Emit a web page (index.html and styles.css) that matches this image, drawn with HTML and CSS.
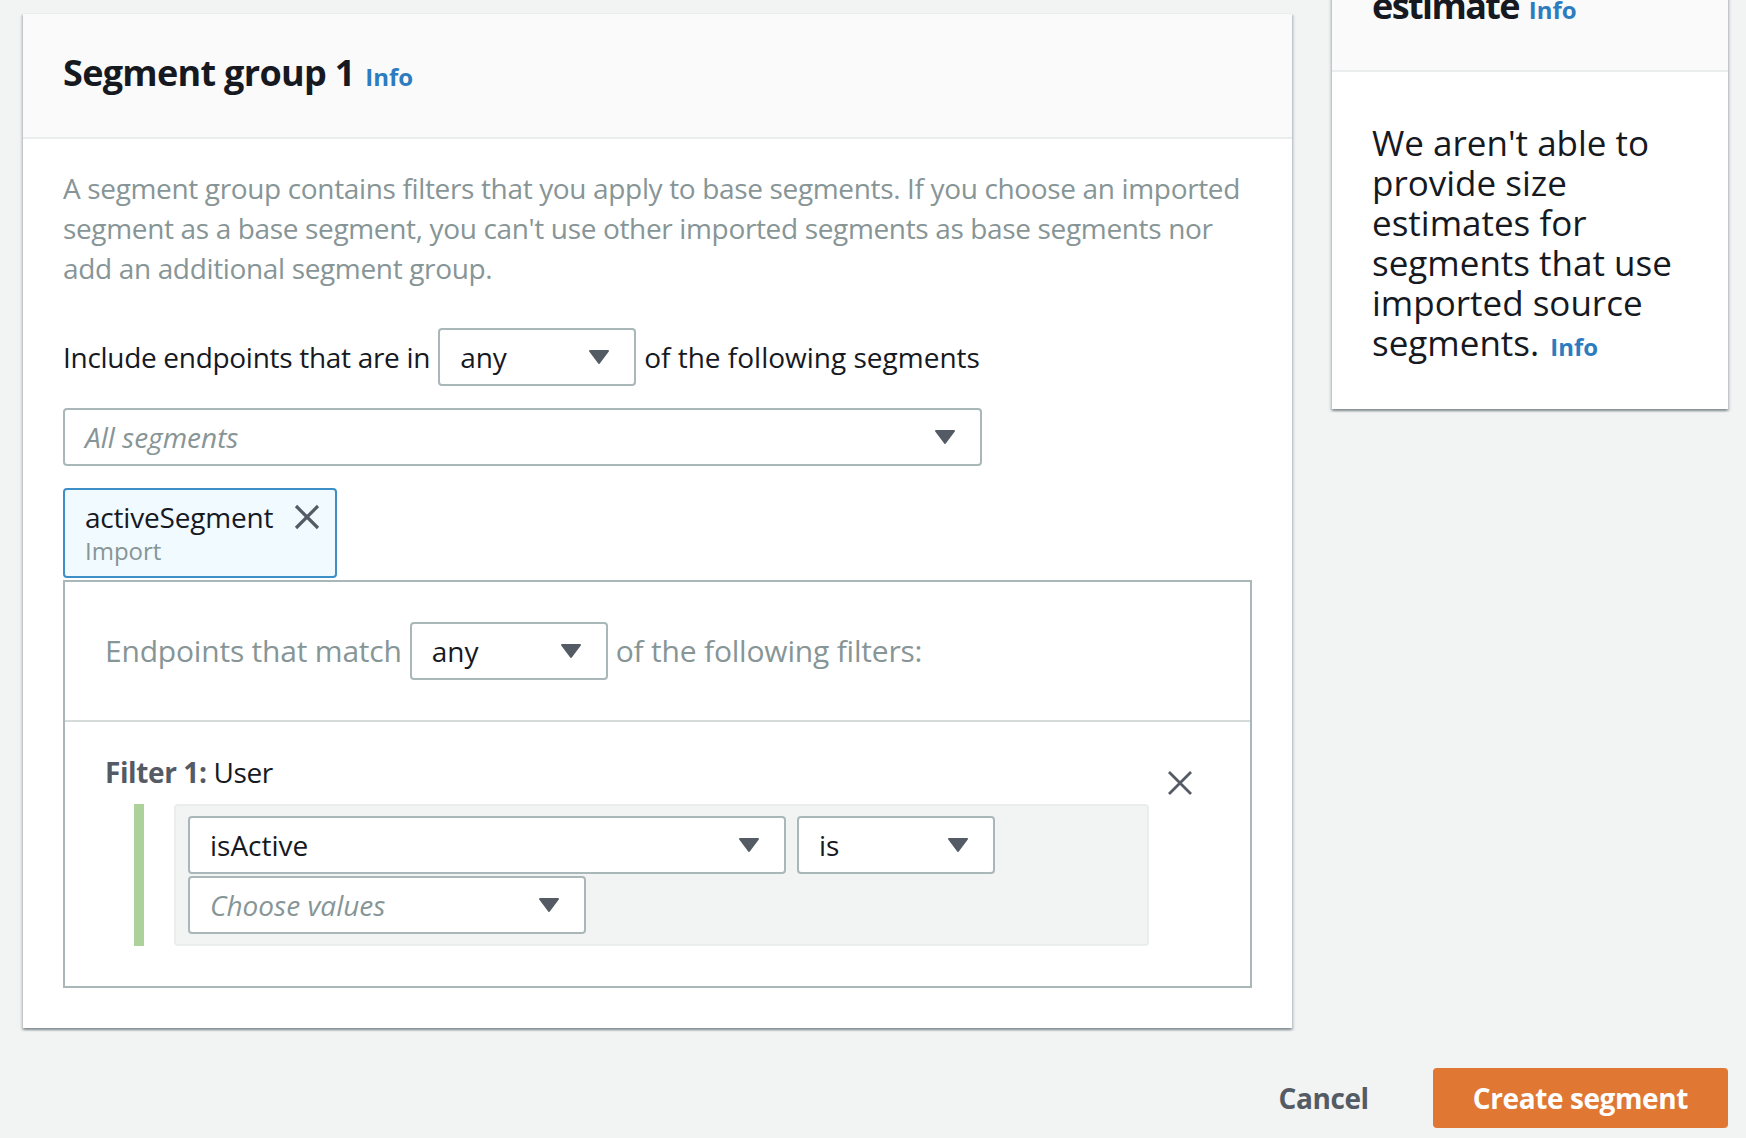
FILE: index.html
```html
<!DOCTYPE html>
<html lang="en">
<head>
<meta charset="utf-8">
<title>Create segment</title>
<link rel="stylesheet" href="styles.css">
</head>
<body>
<div class="page">
  <main class="card main-card">
    <div class="card-header">
      <h2 class="card-title">Segment group 1 <a class="info">Info</a></h2>
    </div>
    <div class="card-body">
      <p class="desc">A segment group contains filters that you apply to base segments. If you choose an imported<br>segment as a base segment, you can't use other imported segments as base segments nor<br>add an additional segment group.</p>

      <div class="inline-row include-row">
        <span class="tight">Include endpoints that are in</span>
        <div class="select select-sm"><span>any</span><svg class="caret" width="22" height="16" viewBox="0 0 22 16"><path d="M2 2h18L11 14z"/></svg></div>
        <span>of the following segments</span>
      </div>

      <div class="select select-wide placeholder"><span>All segments</span><svg class="caret" width="22" height="16" viewBox="0 0 22 16"><path d="M2 2h18L11 14z"/></svg></div>

      <div class="token">
        <div class="token-text">
          <div class="token-name">activeSegment</div>
          <div class="token-sub">Import</div>
        </div>
        <svg class="x-icon token-x" width="28" height="28" viewBox="0 0 28 28"><path d="M3 3L25 25M25 3L3 25"/></svg>
      </div>

      <div class="filter-box">
        <div class="inline-row filter-head">
          <span>Endpoints that match</span>
          <div class="select select-sm"><span>any</span><svg class="caret" width="22" height="16" viewBox="0 0 22 16"><path d="M2 2h18L11 14z"/></svg></div>
          <span>of the following filters:</span>
        </div>
        <div class="filter-body">
          <div class="filter-label"><b>Filter 1:</b> User</div>
          <svg class="x-icon filter-remove" width="28" height="28" viewBox="0 0 28 28"><path d="M3 3L25 25M25 3L3 25"/></svg>
          <div class="condition">
            <div class="bar"></div>
            <div class="cond-box">
              <div class="cond-row">
                <div class="select select-attr"><span>isActive</span><svg class="caret" width="22" height="16" viewBox="0 0 22 16"><path d="M2 2h18L11 14z"/></svg></div>
                <div class="select select-op"><span>is</span><svg class="caret" width="22" height="16" viewBox="0 0 22 16"><path d="M2 2h18L11 14z"/></svg></div>
              </div>
              <div class="cond-row">
                <div class="select select-val placeholder"><span>Choose values</span><svg class="caret" width="22" height="16" viewBox="0 0 22 16"><path d="M2 2h18L11 14z"/></svg></div>
              </div>
            </div>
          </div>
        </div>
      </div>
    </div>
  </main>

  <aside class="card side-card">
    <div class="card-header">
      <h2 class="card-title">Segment size estimate <a class="info">Info</a></h2>
    </div>
    <div class="side-body">
      <p>We aren't able to provide size estimates for segments that use imported source segments. <a class="info">Info</a></p>
    </div>
  </aside>

  <footer class="actions">
    <button class="btn-link">Cancel</button>
    <button class="btn-primary">Create segment</button>
  </footer>
</div>
</body>
</html>
```

FILE: styles.css
```css
* { box-sizing: border-box; }

body {
  margin: 0;
  background: #f2f3f3;
  font-family: "Open Sans", "Noto Sans", sans-serif;
  color: #16191f;
}

.page {
  display: grid;
  grid-template-columns: 1fr 396px;
  column-gap: 40px;
  align-items: start;
  padding: 13px 18px 0 23px;
}

.card {
  background: #fff;
  box-shadow: 0 2px 2px rgba(0, 28, 36, 0.3), 2px 2px 2px rgba(0, 28, 36, 0.12), -2px 2px 2px rgba(0, 28, 36, 0.12);
  border-top: 1px solid #eaeded;
}

.card-header {
  background: #fafafa;
  border-bottom: 2px solid #eaeded;
  padding: 37px 40px 38px;
}

.card-title {
  margin: 0;
  font-size: 36px;
  line-height: 44px;
  font-weight: 700;
  letter-spacing: -0.7px;
  color: #16191f;
}

.info {
  font-size: 24px;
  font-weight: 700;
  letter-spacing: 0;
  color: #2e7cc0;
  margin-left: 2px;
}

.card-body {
  padding: 29px 40px 40px;
}

.desc {
  margin: 0;
  font-size: 28px;
  line-height: 40px;
  letter-spacing: -0.35px;
  white-space: nowrap;
  color: #879596;
}

.inline-row {
  display: flex;
  align-items: center;
  gap: 8px;
  font-size: 28px;
  line-height: 40px;
}

.include-row {
  margin-top: 40px;
}

.tight {
  letter-spacing: -0.3px;
}

.select {
  display: flex;
  align-items: center;
  justify-content: space-between;
  height: 58px;
  border: 2px solid #aab7b8;
  border-radius: 4px;
  background: #fff;
  padding: 0 24px 0 20px;
  font-size: 28px;
  line-height: 40px;
  letter-spacing: 0;
  color: #16191f;
}

.caret path {
  fill: #545b64;
  stroke: #545b64;
  stroke-width: 2;
  stroke-linejoin: round;
}

.select-sm { width: 198px; }
.select-wide { width: 919px; margin-top: 22px; }
.select-attr { width: 598px; }
.select-op { width: 198px; }
.select-val { width: 398px; }

.placeholder span {
  font-style: italic;
  color: #879596;
}

.token {
  display: flex;
  align-items: flex-start;
  gap: 20px;
  width: fit-content;
  margin-top: 22px;
  border: 2px solid #3d8fc6;
  border-radius: 4px;
  background: #f1faff;
  padding: 9px 14px 9px 20px;
}

.token-name {
  font-size: 28px;
  line-height: 36px;
  letter-spacing: -0.2px;
}

.token-sub {
  font-size: 24px;
  line-height: 32px;
  color: #879596;
}

.x-icon path {
  stroke: #545b64;
  stroke-width: 3.2;
  fill: none;
}

.token-x {
  margin-top: 4px;
}

.filter-box {
  margin-top: 2px;
  border: 2px solid #aab7b8;
}

.filter-head {
  padding: 40px;
  border-bottom: 2px solid #d5dbdb;
  color: #879596;
  font-size: 30px;
  letter-spacing: -0.2px;
}

.filter-body {
  display: grid;
  grid-template-columns: 1fr 28px;
  column-gap: 17px;
  padding: 30px 56px 40px 40px;
}

.filter-label {
  grid-column: 1;
  font-size: 28px;
  line-height: 40px;
  letter-spacing: -0.4px;
  margin-bottom: 12px;
}

.filter-label b {
  color: #545b64;
}

.filter-remove {
  grid-column: 2;
  grid-row: 1 / span 2;
  align-self: start;
  margin-top: 17px;
}

.filter-remove path {
  stroke-width: 2.8;
}

.condition {
  grid-column: 1;
  display: flex;
  gap: 30px;
  padding-left: 29px;
}

.bar {
  width: 10px;
  background: #add19a;
}

.cond-box {
  flex: 1;
  background: #f2f3f3;
  border: 2px solid #eaeded;
  border-radius: 4px;
  padding: 10px 12px;
  display: flex;
  flex-direction: column;
  gap: 2px;
}

.cond-row {
  display: flex;
  gap: 11px;
}

.side-card {
  margin-top: -111px;
}

.side-card .card-title {
  letter-spacing: -1.6px;
}

.side-card .card-title .info {
  letter-spacing: 0;
}

.side-body {
  padding: 51px 40px 42px;
}

.side-body p {
  margin: 0;
  font-size: 35px;
  line-height: 40px;
  color: #16191f;
}

.actions {
  grid-column: 1 / -1;
  display: flex;
  justify-content: flex-end;
  align-items: center;
  gap: 24px;
  margin-top: 40px;
}

.btn-link {
  border: 0;
  background: none;
  font-family: inherit;
  font-size: 28px;
  font-weight: 700;
  letter-spacing: -0.4px;
  color: #545b64;
  padding: 0 40px;
  height: 60px;
}

.btn-primary {
  border: 0;
  border-radius: 4px;
  background: #e07733;
  color: #fff;
  font-family: inherit;
  font-size: 28px;
  font-weight: 700;
  letter-spacing: -0.4px;
  height: 60px;
  padding: 0 40px;
}
```
